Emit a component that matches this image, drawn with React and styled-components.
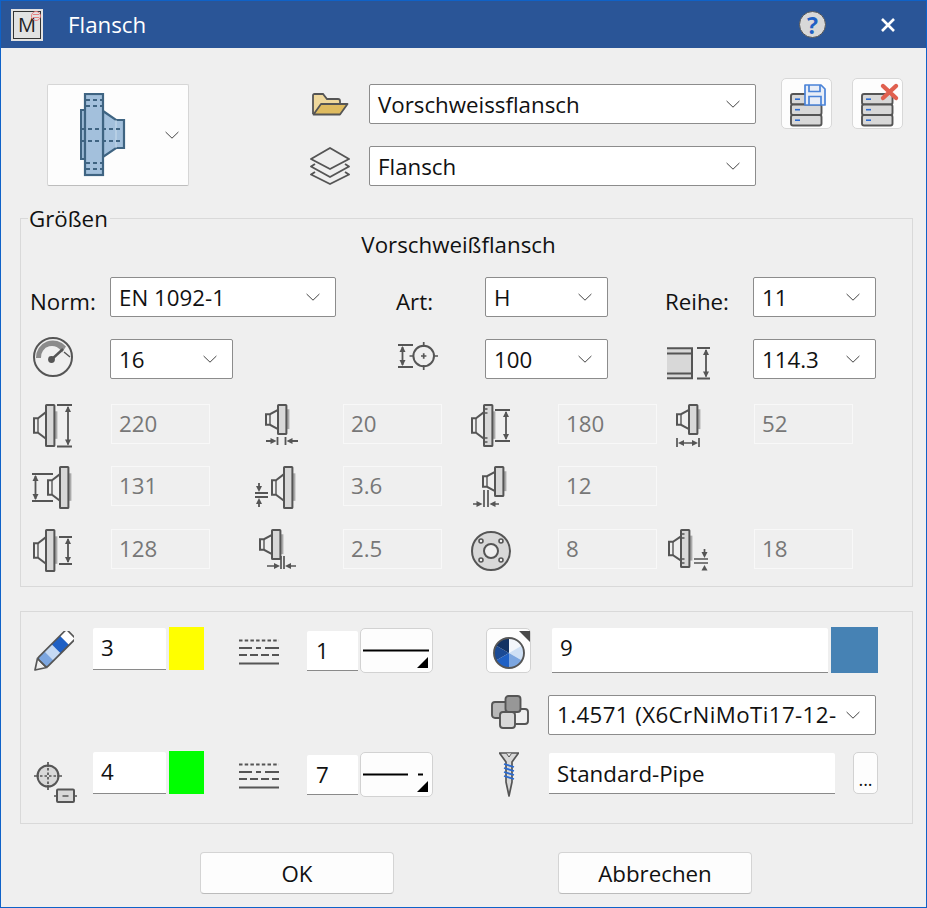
import styled, { createGlobalStyle } from 'styled-components';

const INK = '#555';
const FILL = '#d8d8d8';
const BG = '#efefef';

const GlobalStyle = createGlobalStyle`
  html, body {
    margin: 0;
    padding: 0;
    background: ${BG};
  }
`;

const Window = styled.div`
  box-sizing: border-box;
  width: 927px;
  height: 908px;
  border: 1px solid #0f62c8;
  background: ${BG};
  font-family: 'Open Sans', 'Noto Sans', sans-serif;
  font-size: 22.3px;
  color: #111;
  overflow: hidden;
`;

const TitleBar = styled.header`
  display: flex;
  align-items: center;
  height: 47px;
  padding: 0 31px 0 10px;
  background: #2a5597;
  color: #fff;
`;

const Logo = styled.div`
  position: relative;
  box-sizing: border-box;
  display: flex;
  align-items: center;
  justify-content: center;
  width: 32px;
  height: 32px;
  background: #e2e2e2;
  border: 2px solid #e2e2e2;
  box-shadow: inset 0 0 0 1px #333;
  color: #222;
  font-size: 20px;
`;

const LogoStamp = styled.svg`
  position: absolute;
  top: -1px;
  right: -1px;
`;

const Title = styled.div`
  flex: 1;
  margin-left: 25px;
`;

const HelpDot = styled.div`
  box-sizing: border-box;
  display: flex;
  align-items: center;
  justify-content: center;
  width: 27px;
  height: 27px;
  margin-right: 55px;
  border-radius: 50%;
  background: #d8d8d8;
  border: 1.5px solid #555;
  color: #1f60c4;
  font-weight: 700;
  font-size: 23px;
`;

const TopArea = styled.section`
  display: flex;
  align-items: flex-start;
  padding: 30px 0 32px 46px;
`;

const PickerButton = styled.div`
  box-sizing: border-box;
  position: relative;
  display: flex;
  align-items: center;
  width: 142px;
  height: 102px;
  margin: 6px 120px 0 0;
  padding-left: 32px;
  background: #fdfdfd;
  border: 1px solid #d6d6d6;
  border-bottom-color: #bdbdbd;
  border-radius: 2px;
`;

const PickerChevron = styled.div`
  position: absolute;
  right: 9px;
  top: 46px;
  line-height: 0;
`;

const SelectStack = styled.div`
  display: flex;
  flex-direction: column;
  gap: 22px;
  margin-top: 6px;
`;

const SelectRow = styled.div`
  display: flex;
  align-items: center;
  gap: 18px;
`;

const IconSlot = styled.div`
  display: flex;
  justify-content: center;
  width: 42px;
  line-height: 0;
`;

const Select = styled.div`
  box-sizing: border-box;
  display: flex;
  align-items: center;
  justify-content: space-between;
  width: ${({ $w }) => $w}px;
  height: 40px;
  padding: 0 15px 0 8px;
  background: #fff;
  border: 1px solid #8c8c8c;
  border-radius: 2px;
  white-space: nowrap;
  overflow: hidden;
  letter-spacing: ${({ $spread }) => $spread || 0}px;
`;

const ToolButtons = styled.div`
  display: flex;
  gap: 20px;
  margin-left: 25px;
`;

const ToolButton = styled.div`
  box-sizing: border-box;
  width: 51px;
  height: 51px;
  background: #fdfdfd;
  border: 1px solid #d8d8d8;
  border-radius: 5px;
  line-height: 0;
`;

const Group = styled.section`
  box-sizing: border-box;
  position: relative;
  width: 893px;
  margin-left: 19px;
  border: 1px solid #d9d9d9;
`;

const Legend = styled.div`
  position: absolute;
  top: -12px;
  left: 7px;
  padding: 0 2px 0 1px;
  background: ${BG};
  line-height: 24px;
`;

const GroupHeading = styled.div`
  box-sizing: border-box;
  height: 58px;
  padding: 12px 16px 0 0;
  text-align: center;
  line-height: 28px;
`;

const SizeGrid = styled.div`
  display: grid;
  grid-template-columns: 80px 226px 60px 89px 123px 57px 88px 123px;
  grid-auto-rows: 40px;
  row-gap: 22px;
  margin-left: 9px;
`;

const SizeLabel = styled.div`
  display: flex;
  align-items: center;
  height: 100%;
  padding-top: 8px;
  box-sizing: border-box;
`;

const SizeIcon = styled.div`
  line-height: 0;
  margin-left: ${({ $x }) => $x || 0}px;
  margin-top: ${({ $top }) => $top || 0}px;
`;

const DimGrid = styled.div`
  display: grid;
  grid-template-columns: 81px 99px 133px 99px 116px 99px 97px 99px;
  grid-template-rows: 62px 63px 40px;
  margin: 25px 0 17px 9px;
`;

const DimField = styled.div`
  box-sizing: border-box;
  display: flex;
  align-items: center;
  height: 40px;
  padding: 0 0 2px 7px;
  border: 1px solid #f8f8f8;
  color: #777;
`;

const DimGap = styled.div`
  grid-column: span 2;
`;

const Panel = styled.section`
  box-sizing: border-box;
  display: flex;
  width: 893px;
  margin: 24px 0 0 19px;
  padding: 15px 0 26px 13px;
  border: 1px solid #d9d9d9;
`;

const PenColumn = styled.div`
  display: flex;
  flex-direction: column;
  gap: 78px;
  width: 399px;
  margin-right: 53px;
`;

const PenRow = styled.div`
  display: flex;
  align-items: flex-start;
  height: 46px;
`;

const Slot = styled.div`
  flex: none;
  line-height: 0;
  margin-top: ${({ $top }) => $top || 0}px;
  margin-left: ${({ $left }) => $left || 0}px;
`;

const Field = styled.div`
  box-sizing: border-box;
  flex: none;
  display: flex;
  align-items: center;
  width: ${({ $w }) => $w}px;
  height: ${({ $h }) => $h}px;
  margin-top: ${({ $top }) => $top || 0}px;
  margin-left: ${({ $left }) => $left || 0}px;
  padding: 0 0 ${({ $lift }) => $lift || 0}px ${({ $pad }) => $pad || 8}px;
  background: #fff;
  border-bottom: 1px solid #8a8a8a;
  border-radius: 2px 2px 0 0;
`;

const Swatch = styled.div`
  flex: none;
  width: ${({ $w }) => $w}px;
  height: ${({ $h }) => $h}px;
  margin-left: 3px;
  background: ${({ $color }) => $color};
`;

const IconButton = styled.div`
  box-sizing: border-box;
  flex: none;
  width: ${({ $w }) => $w}px;
  height: ${({ $h }) => $h}px;
  margin-top: ${({ $top }) => $top || 0}px;
  margin-left: ${({ $left }) => $left || 0}px;
  background: #fdfdfd;
  border: 1px solid #d2d2d2;
  border-radius: 5px;
  line-height: 0;
`;

const DotsButton = styled(IconButton)`
  display: flex;
  align-items: center;
  justify-content: center;
  color: #111;
  font-size: 18px;
  line-height: 20px;
  padding-top: 12px;
`;

const MaterialColumn = styled.div`
  display: flex;
  flex-direction: column;
  width: 392px;
`;

const MaterialRow = styled.div`
  display: flex;
  align-items: flex-start;
  height: ${({ $h }) => $h}px;
  margin-bottom: ${({ $gap }) => $gap || 0}px;
`;

const Footer = styled.footer`
  display: flex;
  gap: 164px;
  margin: 28px 0 0 199px;
`;

const ActionButton = styled.div`
  box-sizing: border-box;
  display: flex;
  align-items: center;
  justify-content: center;
  width: 194px;
  height: 42px;
  background: #fdfdfd;
  border: 1px solid #d4d4d4;
  border-bottom-color: #bbb;
  border-radius: 4px;
`;

const Chevron = ({ size = 14 }) => (
  <svg width={size} height={size * 0.6} viewBox='0 0 14 8' fill='none' stroke='#444' strokeWidth='1'>
    <path d='M.6 .8 7 7 13.4 .8' />
  </svg>
);

// small dimension arrow, tip at (x,y)
const Tip = ({ x, y, dir }) => {
  const p = {
    up: `${x},${y} ${x - 3},${y + 6} ${x + 3},${y + 6}`,
    down: `${x},${y} ${x - 3},${y - 6} ${x + 3},${y - 6}`,
    left: `${x},${y} ${x + 6},${y - 3} ${x + 6},${y + 3}`,
    right: `${x},${y} ${x - 6},${y - 3} ${x - 6},${y + 3}`,
  }[dir];
  return <polygon points={p} fill={INK} />;
};

const VDim = ({ x, x1, x2, y1, y2 }) => (
  <g>
    <path d={`M${x1} ${y1}H${x2}M${x1} ${y2}H${x2}M${x} ${y1 + 2}V${y2 - 2}`} stroke={INK} strokeWidth='1.8' fill='none' />
    <Tip x={x} y={y1 + 1} dir='up' />
    <Tip x={x} y={y2 - 1} dir='down' />
  </g>
);

const Flange = ({ x = 0, y = 0, h = 43, holes }) => {
  const t = y + h * 0.19;
  const b = y + h * 0.81;
  const ht = y + h * 0.33;
  const hb = y + h * 0.67;
  return (
    <g>
      <path d={`M${x + 13} ${t}L${x + 5} ${ht}H${x + 1}V${hb}H${x + 5}L${x + 13} ${b}Z`} fill={BG} stroke={INK} strokeWidth='2' />
      <path d={`M${x + 5} ${ht}V${hb}`} stroke={INK} strokeWidth='1.4' />
      <rect x={x + 22} y={y + h * 0.17} width='2.4' height={h * 0.64} fill='#aaa' />
      <rect x={x + 13} y={y + 1} width='8.4' height={h - 2} rx='.6' fill={FILL} stroke={INK} strokeWidth='2' />
      {holes && (
        <path
          d={`M${x + 13} ${y + 5}h3.500M${x + 13} ${y + 9}h3.500M${x + 13} ${y + h - 5}h3.500M${x + 13} ${y + h - 9}h3.500`}
          stroke={INK}
          strokeWidth='1.6'
        />
      )}
    </g>
  );
};

const Svg = ({ w, h, children }) => (
  <svg width={w} height={h} viewBox={`0 0 ${w} ${h}`}>
    {children}
  </svg>
);

const OuterDiameterIcon = () => (
  <Svg w={42} h={44}>
    <Flange />
    <VDim x={35} x1={24} x2={39} y1={1} y2={42.500} />
  </Svg>
);

const PlateGapIcon = () => (
  <Svg w={36} h={44}>
    <Flange h={31} />
    <path d='M12.500 33v8M20.500 33v8M1 37h8M25 37h8' stroke={INK} strokeWidth='1.8' />
    <Tip x={11.500} y={37} dir='right' />
    <Tip x={21.500} y={37} dir='left' />
  </Svg>
);

const BoltCircleIcon = () => (
  <Svg w={42} h={44}>
    <Flange holes />
    <VDim x={35} x1={24} x2={39} y1={6} y2={37} />
  </Svg>
);

const LengthIcon = () => (
  <Svg w={26} h={44}>
    <Flange h={31} />
    <path d='M1 34v9M23 34v9M4 39h16' stroke={INK} strokeWidth='1.7' />
    <Tip x={2} y={39} dir='left' />
    <Tip x={22} y={39} dir='right' />
  </Svg>
);

const NeckLeftIcon = () => (
  <Svg w={42} h={44}>
    <VDim x={3.500} x1={0} x2={21} y1={8} y2={35} />
    <Flange x={15} />
  </Svg>
);

const WallThicknessIcon = () => (
  <Svg w={42} h={44}>
    <Flange x={16} />
    <path d='M0 27h13M0 31h13M4 17v5M4 36v5' stroke={INK} strokeWidth='1.8' />
    <Tip x={4} y={26} dir='down' />
    <Tip x={4} y={32} dir='up' />
  </Svg>
);

const GapBelowIcon = () => (
  <Svg w={36} h={44}>
    <Flange x={9} h={31} />
    <path d='M11 24v17M15 24v17M0 38h6M20 38h6' stroke={INK} strokeWidth='1.7' />
    <Tip x={9.500} y={38} dir='right' />
    <Tip x={16.500} y={38} dir='left' />
  </Svg>
);

const HubIcon = () => (
  <Svg w={42} h={44}>
    <Flange />
    <VDim x={35} x1={26} x2={39} y1={8} y2={35} />
  </Svg>
);

const GapRightIcon = () => (
  <Svg w={40} h={44}>
    <Flange h={31} />
    <path d='M22 27v13M25 27v13M8 37h8M31 37h6' stroke={INK} strokeWidth='1.7' />
    <Tip x={21} y={37} dir='right' />
    <Tip x={26} y={37} dir='left' />
  </Svg>
);

const BoltPlateIcon = () => (
  <Svg w={40} h={40}>
    <circle cx='20' cy='20' r='19' fill={FILL} stroke={INK} strokeWidth='2' />
    <circle cx='20' cy='20' r='7' fill={BG} stroke={INK} strokeWidth='2' />
    {[[10, 10], [30, 10], [10, 29], [30, 29]].map(([cx, cy]) => (
      <circle key={`${cx}-${cy}`} cx={cx} cy={cy} r='2' fill={BG} stroke={INK} strokeWidth='1.6' />
    ))}
  </Svg>
);

const PlateThicknessIcon = () => (
  <Svg w={42} h={44}>
    <Flange h={39} holes />
    <path d='M26 30h14M26 34h14M36.500 20v4' stroke={INK} strokeWidth='1.7' />
    <Tip x={36.500} y={29} dir='down' />
    <polygon points='36.500,36 33.500,41.500 39.500,41.500' fill={INK} />
  </Svg>
);

const GaugeIcon = () => (
  <Svg w={40} h={40}>
    <circle cx='20' cy='20' r='19' fill='none' stroke={INK} strokeWidth='2' />
    <path d='M3 21A17 17 0 0 1 33 9.500L29 15.500A11 11 0 0 0 8 21Z' fill='#8b8b8b' />
    <path d='M31 15l6 5' stroke={INK} strokeWidth='1.4' />
    <path d='M18 23L30 12' stroke={INK} strokeWidth='2.400' />
    <circle cx='18.500' cy='22.500' r='3.400' fill={INK} />
  </Svg>
);

const PitchIcon = () => (
  <Svg w={42} h={30}>
    <VDim x={4.500} x1={0} x2={15} y1={3} y2={25} />
    <circle cx='25.700' cy='14' r='10.300' fill='none' stroke={INK} strokeWidth='2' />
    <path d='M25.700 0v5M25.700 23v5M11.500 14h4.500M35.500 14h4.500M23 14h5.400M25.700 11.300v5.400' stroke={INK} strokeWidth='1.7' />
  </Svg>
);

const PipeIcon = () => (
  <Svg w={44} h={33}>
    <rect x='0' y='2' width='24' height='28' fill={FILL} />
    <path d='M0 1.200h25v30H0M0 6.500h24M0 26.500h24' fill='none' stroke={INK} strokeWidth='2' />
    <VDim x={39} x1={30} x2={43} y1={1} y2={31.500} />
  </Svg>
);

const FolderIcon = () => (
  <svg width='37' height='23' viewBox='0 0 37 23'>
    <path d='M1 21V2.500Q1 1 2.500 1H11l4 5h11q2 0 2 2v3' fill='#efd89c' stroke={INK} strokeWidth='1.8' />
    <path d='M1.500 21.500L9 11h26.500L28 21.500Z' fill='#dfbb5f' stroke={INK} strokeWidth='1.8' strokeLinejoin='round' />
  </svg>
);

const LayersIcon = () => (
  <svg width='42' height='38' viewBox='0 0 42 38' fill='none' stroke={INK} strokeWidth='1.9' strokeLinejoin='round'>
    <path d='M21 1L40 12 21 22 2 12Z' fill={BG} />
    <path d='M36 17l4 2.500L21 30 2 19.500 6 17' />
    <path d='M36 25l4 2.500L21 37 2 27.500 6 25' />
  </svg>
);

const DbStack = () => (
  <g>
    {[15, 25.500, 36].map(y => (
      <g key={y}>
        <rect x='9' y={y} width='30.500' height='10.500' rx='2' fill={FILL} stroke={INK} strokeWidth='1.9' />
        <path d={`M13 ${y + 5.200}h5`} stroke='#2a6ad0' strokeWidth='1.6' />
      </g>
    ))}
  </g>
);

const SaveIcon = () => (
  <svg width='49' height='49' viewBox='0 0 49 49'>
    <DbStack />
    <path
      d='M23 6H39L43 10V26H23Z'
      fill='#e9eef7'
      stroke='#4a83d8'
      strokeWidth='1.700'
      strokeLinejoin='round'
    />
    <path d='M27 6v6.500H38V6M27 26V17.500H39V26' fill='none' stroke='#4a83d8' strokeWidth='1.7' />
  </svg>
);

const DeleteIcon = () => (
  <svg width='49' height='49' viewBox='0 0 49 49'>
    <DbStack />
    <path d='M30 7L43 19M43 7L30 19' stroke='#e0604f' strokeWidth='4.400' strokeLinecap='round' />
  </svg>
);

const FlangeLarge = () => (
  <svg width='46' height='84' viewBox='0 0 46 84' fill='#a3c0dc' stroke='#3f6482' strokeWidth='2.2'>
    <path d='M1 17H5V66H1Z' />
    <path d='M23 18L36 27H44V55H36L23 64Z' />
    <path d='M36 27V55' stroke='#c9dcec' strokeWidth='1' />
    <rect x='5' y='1' width='18' height='81' />
    <path
      d='M6 7H23M6 13H23M1 36H44M1 48H44M6 70H23M6 76H23'
      strokeDasharray='4 3'
      fill='none'
      strokeWidth='1.8'
    />
  </svg>
);

const PencilIcon = () => (
  <Svg w={40} h={40}>
    <g transform='translate(1 39) rotate(-45)'>
      <path d='M0 0L10 -6.500V6.500Z' fill={BG} stroke={INK} strokeWidth='1.7' strokeLinejoin='round' />
      <rect x='10' y='-6.500' width='10' height='13' fill='#7ca6e0' />
      <rect x='20' y='-6.500' width='10' height='13' fill='#c5d9f3' />
      <rect x='30' y='-6.500' width='12' height='13' fill='#1f60c4' />
      <rect x='42' y='-6.500' width='9' height='13' fill='#fff' />
      <rect x='10' y='-6.500' width='41' height='13' rx='2' fill='none' stroke={INK} strokeWidth='1.7' />
    </g>
  </Svg>
);

const PlacementIcon = () => (
  <Svg w={44} h={42}>
    <circle cx='14' cy='14' r='10.500' fill={FILL} stroke={INK} strokeWidth='2' />
    <path d='M14 0v5M14 23v5M0 14h5M23 14h5' stroke={INK} strokeWidth='1.7' />
    <path d='M14 6v16M6 14h16' stroke={INK} strokeWidth='1.700' strokeDasharray='2.500 2' />
    <rect x='23' y='27.500' width='17' height='12.500' rx='1' fill={FILL} stroke={INK} strokeWidth='2' />
    <path d='M20 34h2M41 34h2M28.500 34h6' stroke={INK} strokeWidth='1.7' />
  </Svg>
);

const LineTypesIcon = () => (
  <Svg w={41} h={26}>
    <g stroke={INK} strokeWidth='2'>
      <path d='M0 1.500h40' strokeDasharray='3.500 2.200' />
      <path d='M0 9h13M17 9h5M26 9h14' />
      <path d='M0 16h40' strokeDasharray='8 3' />
      <path d='M0 24.500h40' />
    </g>
  </Svg>
);

const LineSample = ({ dashed }) => (
  <svg width='71' height='43' viewBox='0 0 71 43'>
    <path d={dashed ? 'M2 21.500H47M57 21.500H62' : 'M2 21.500H68'} stroke='#000' strokeWidth='2' />
    <polygon points='67,28 67,39 56,39' fill='#000' />
  </svg>
);

const ColorWheelIcon = () => {
  const cx = 22;
  const cy = 24;
  const r = 15;
  const segs = ['#f3f6fb', '#cfe0f5', '#7ca6e0', '#1f60c4', '#1b4a94', '#123263'];
  const point = a => `${cx + r * Math.sin((a * Math.PI) / 180)} ${cy - r * Math.cos((a * Math.PI) / 180)}`;
  return (
    <svg width='43' height='43' viewBox='0 0 43 43'>
      {segs.map((color, i) => (
        <path key={color} d={`M${cx} ${cy}L${point(i * 60)}A${r} ${r} 0 0 1 ${point(i * 60 + 60)}Z`} fill={color} />
      ))}
      <circle cx={cx} cy={cy} r={r} fill='none' stroke={INK} strokeWidth='1.9' />
      <polygon points='32,2 43,2 43,13' fill='#4a4a4a' />
    </svg>
  );
};

const MaterialIcon = () => (
  <svg width='39' height='34' viewBox='0 0 39 34' stroke={INK} strokeWidth='1.9'>
    <rect x='22' y='14' width='15' height='15' rx='3' fill={BG} />
    <rect x='1' y='7' width='16' height='16' rx='3' fill='#b8b8b8' />
    <rect x='14.500' y='1' width='15' height='16' rx='3' fill='#979797' />
    <rect x='9' y='17' width='15' height='16' rx='3' fill={FILL} />
  </svg>
);

const ScrewIcon = () => (
  <svg width='20' height='45' viewBox='0 0 20 45'>
    <path d='M.5 1H19.500L13 10V30L10 44 7 30V10Z' fill={FILL} stroke={INK} strokeWidth='1.7' strokeLinejoin='round' />
    <path d='M7.500 1.500L10 5 12.500 1.500' fill={BG} stroke={INK} strokeWidth='1' />
    <path d='M5 12l10 3M5 16l10 3M5 20l10 3M5 24l10 3' stroke='#2a6ad0' strokeWidth='1.8' />
  </svg>
);

const DIM_CELLS = [
  { icon: OuterDiameterIcon, x: 3, value: '220' },
  { icon: PlateGapIcon, x: 55, value: '20' },
  { icon: BoltCircleIcon, x: 29, value: '180' },
  { icon: LengthIcon, x: 19, value: '52' },
  { icon: NeckLeftIcon, x: 2, value: '131' },
  { icon: WallThicknessIcon, x: 45, value: '3.6' },
  { icon: GapBelowIcon, x: 31, value: '12' },
  null,
  { icon: HubIcon, x: 3, value: '128' },
  { icon: GapRightIcon, x: 49, value: '2.5' },
  { icon: BoltPlateIcon, x: 29, value: '8', top: 2 },
  { icon: PlateThicknessIcon, x: 11, value: '18' },
];

const SizeSelect = ({ w, spread, children }) => (
  <Select $w={w} $spread={spread}>
    <span>{children}</span>
    <Chevron />
  </Select>
);

function DimCell({ icon: Icon, x, value, top }) {
  return (
    <>
      <Slot $left={x} $top={top}>
        <Icon />
      </Slot>
      <DimField>{value}</DimField>
    </>
  );
}

export default function App() {
  return (
    <Window>
      <GlobalStyle />
      <TitleBar>
        <Logo>
          M
          <LogoStamp width='12' height='12' viewBox='0 0 12 12' fill='none' stroke='#e88080' strokeWidth='1'>
            <circle cx='6' cy='6' r='4.500' />
            <path d='M3 4.500h6M3 7.500h6' />
          </LogoStamp>
        </Logo>
        <Title>Flansch</Title>
        <HelpDot>?</HelpDot>
        <svg width='14' height='14' viewBox='0 0 14 14' stroke='#fff' strokeWidth='2.600'>
          <path d='M1 1L13 13M13 1L1 13' />
        </svg>
      </TitleBar>

      <TopArea>
        <PickerButton>
          <FlangeLarge />
          <PickerChevron>
            <Chevron />
          </PickerChevron>
        </PickerButton>
        <SelectStack>
          <SelectRow>
            <IconSlot>
              <FolderIcon />
            </IconSlot>
            <SizeSelect w={387}>Vorschweissflansch</SizeSelect>
          </SelectRow>
          <SelectRow>
            <IconSlot>
              <LayersIcon />
            </IconSlot>
            <SizeSelect w={387}>Flansch</SizeSelect>
          </SelectRow>
        </SelectStack>
        <ToolButtons>
          <ToolButton>
            <SaveIcon />
          </ToolButton>
          <ToolButton>
            <DeleteIcon />
          </ToolButton>
        </ToolButtons>
      </TopArea>

      <Group>
        <Legend>Größen</Legend>
        <GroupHeading>Vorschweißflansch</GroupHeading>
        <SizeGrid>
          <SizeLabel>Norm:</SizeLabel>
          <SizeSelect w={226}>EN 1092-1</SizeSelect>
          <div />
          <SizeLabel>Art:</SizeLabel>
          <SizeSelect w={123}>H</SizeSelect>
          <div />
          <SizeLabel>Reihe:</SizeLabel>
          <SizeSelect w={123}>11</SizeSelect>
          <SizeIcon $x={3} $top={-2}>
            <GaugeIcon />
          </SizeIcon>
          <SizeSelect w={123}>16</SizeSelect>
          <div />
          <SizeIcon $x={2} $top={3}>
            <PitchIcon />
          </SizeIcon>
          <SizeSelect w={123}>100</SizeSelect>
          <div />
          <SizeIcon $x={2} $top={8}>
            <PipeIcon />
          </SizeIcon>
          <SizeSelect w={123}>114.3</SizeSelect>
        </SizeGrid>
        <DimGrid>
          {DIM_CELLS.map((cell, i) => (cell ? <DimCell key={i} {...cell} /> : <DimGap key={i} />))}
        </DimGrid>
      </Group>

      <Panel>
        <PenColumn>
          <PenRow>
            <Slot $top={4}>
              <PencilIcon />
            </Slot>
            <Field $w={73} $h={42} $top={1} $left={19} $pad={8} $lift={2}>3</Field>
            <Swatch $w={35} $h={43} $color='#ffff00' />
            <Slot $top={12} $left={35}>
              <LineTypesIcon />
            </Slot>
            <Field $w={51} $h={40} $top={4} $left={27} $pad={9}>1</Field>
            <IconButton $w={73} $h={45} $top={1} $left={2}>
              <LineSample />
            </IconButton>
          </PenRow>
          <PenRow>
            <Slot $top={11}>
              <PlacementIcon />
            </Slot>
            <Field $w={73} $h={42} $top={1} $left={15} $pad={8} $lift={2}>4</Field>
            <Swatch $w={35} $h={43} $color='#00ff00' />
            <Slot $top={12} $left={35}>
              <LineTypesIcon />
            </Slot>
            <Field $w={51} $h={40} $top={4} $left={27} $pad={9}>7</Field>
            <IconButton $w={73} $h={45} $top={1} $left={2}>
              <LineSample dashed />
            </IconButton>
          </PenRow>
        </PenColumn>
        <MaterialColumn>
          <MaterialRow $h={46} $gap={22}>
            <IconButton $w={45} $h={45} $top={1}>
              <ColorWheelIcon />
            </IconButton>
            <Field $w={276} $h={45} $top={1} $left={21} $pad={8} $lift={5}>9</Field>
            <Swatch $w={47} $h={46} $color='#4682b4' />
          </MaterialRow>
          <MaterialRow $h={40} $gap={17}>
            <Slot $left={5}>
              <MaterialIcon />
            </Slot>
            <Slot $left={18}>
              <SizeSelect w={328} spread={0.4}>1.4571 (X6CrNiMoTi17-12-</SizeSelect>
            </Slot>
          </MaterialRow>
          <MaterialRow $h={45}>
            <Slot $left={13}>
              <ScrewIcon />
            </Slot>
            <Field $w={286} $h={41} $top={1} $left={30} $pad={8}>Standard-Pipe</Field>
            <DotsButton $w={25} $h={42} $left={18}>...</DotsButton>
          </MaterialRow>
        </MaterialColumn>
      </Panel>

      <Footer>
        <ActionButton>OK</ActionButton>
        <ActionButton>Abbrechen</ActionButton>
      </Footer>
    </Window>
  );
}
